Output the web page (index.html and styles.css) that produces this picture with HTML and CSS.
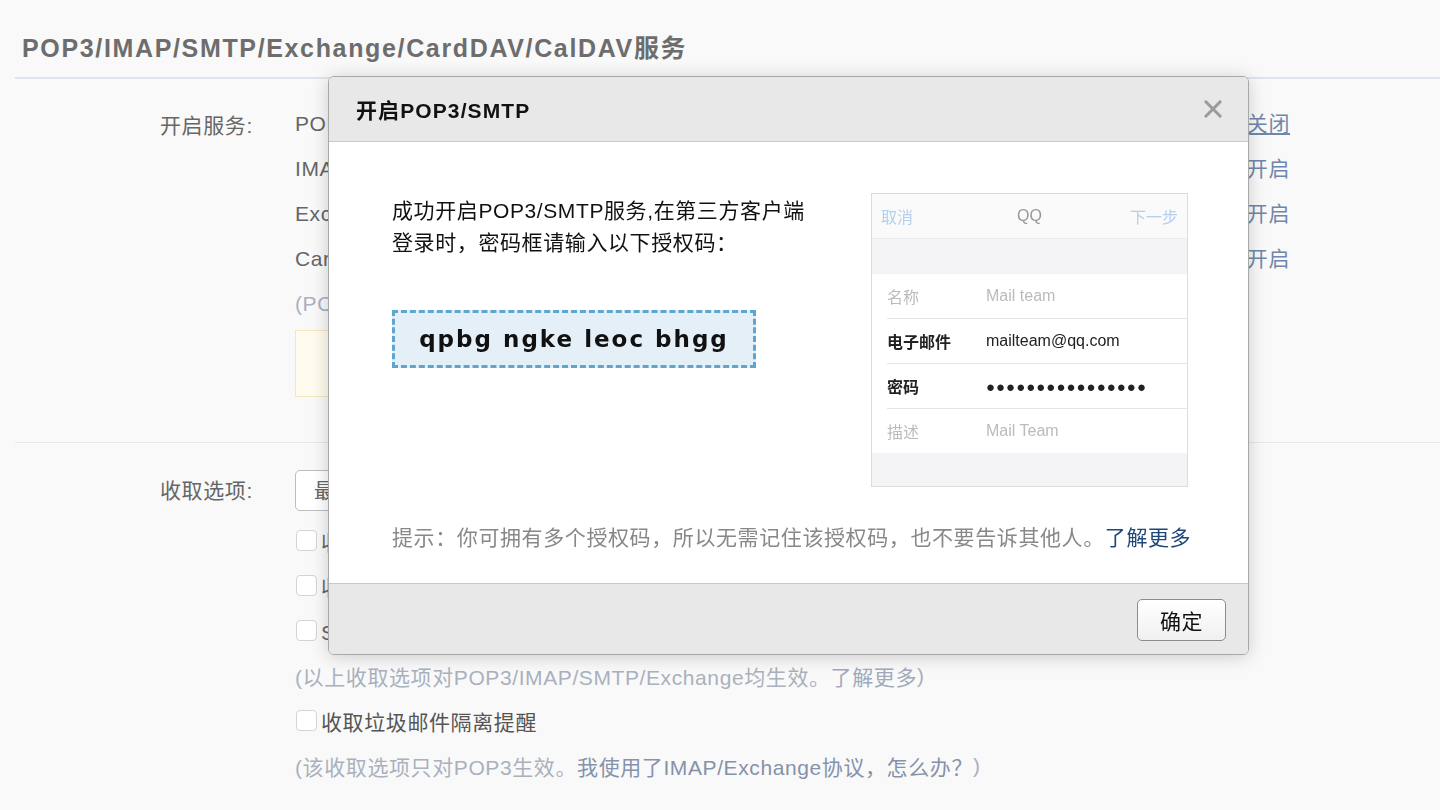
FILE: index.html
```html
<!DOCTYPE html>
<html lang="zh-CN">
<head>
    <meta charset="UTF-8">
    <meta name="viewport" content="width=device-width, initial-scale=1.0">
    <title>POP3/IMAP/SMTP服务设置</title>
    <link rel="stylesheet" href="styles.css">
</head>
<body>

<div class="settings">
    <h2 class="settings-title">POP3/IMAP/SMTP/Exchange/CardDAV/CalDAV服务</h2>

    <!-- 开启服务 -->
    <div class="block">
        <div class="row-label service-label">开启服务:</div>
        <div class="row-field">
            <div class="line"><span>POP3/SMTP服务 (如何使用 Foxmail 等软件收发邮件？)</span><a class="switch underline">关闭</a></div>
            <div class="line"><span>IMAP/SMTP服务 (什么是 IMAP，它又是如何设置？)</span><a class="switch">开启</a></div>
            <div class="line"><span>Exchange服务 (什么是Exchange，它又是如何设置？)</span><a class="switch">开启</a></div>
            <div class="line"><span>CardDAV/CalDAV服务 (什么是CardDAV/CalDAV，它又是如何设置？)</span><a class="switch">开启</a></div>
            <div class="line note">(POP3/IMAP/SMTP/CardDAV/CalDAV服务均支持SSL连接。如何设置？)</div>
            <div class="tip-box">温馨提示：登录第三方客户端时，密码框请输入“授权码”进行验证。</div>
        </div>
    </div>

    <!-- 收取选项 -->
    <div class="block block-last">
        <div class="row-label select-label">收取选项:</div>
        <div class="row-field">
            <div class="select">最近30天的邮件</div>
            <label class="line check"><span class="box"></span>收取“我的文件夹”</label>
            <label class="line check"><span class="box"></span>收取“QQ邮件订阅”</label>
            <label class="line check"><span class="box"></span>SMTP发信后保存到服务器</label>
            <div class="line note">(以上收取选项对POP3/IMAP/SMTP/Exchange均生效。<a class="note-link">了解更多</a>)</div>
            <label class="line check dark"><span class="box"></span>收取垃圾邮件隔离提醒</label>
            <div class="line note">(该收取选项只对POP3生效。<a class="note-strong">我使用了IMAP/Exchange协议，怎么办？</a>)</div>
        </div>
    </div>
</div>

<!-- 弹窗 -->
<div class="dialog">
    <div class="dialog-head">
        <span class="dialog-title">开启POP3/SMTP</span>
        <svg class="close" width="18" height="18" viewBox="0 0 18 18">
            <path d="M2,2 L16,16 M16,2 L2,16" stroke="#9b9b9b" stroke-width="3" stroke-linecap="square"/>
        </svg>
    </div>

    <div class="dialog-body">
        <div class="intro">
            <div class="intro-text">
                <p>成功开启POP3/SMTP服务,在第三方客户端</p>
                <p>登录时，密码框请输入以下授权码：</p>
                <div class="code">qpbg ngke leoc bhgg</div>
            </div>

            <div class="phone">
                <div class="phone-bar">
                    <span class="bar-left">取消</span>
                    <span class="bar-mid">QQ</span>
                    <span class="bar-right">下一步</span>
                </div>
                <div class="phone-gap"></div>
                <div class="phone-list">
                    <div class="phone-row light"><span class="k">名称</span><span>Mail team</span></div>
                    <div class="phone-row"><span class="k">电子邮件</span><span>mailteam@qq.com</span></div>
                    <div class="phone-row"><span class="k">密码</span><span class="dots">●●●●●●●●●●●●●●●●</span></div>
                    <div class="phone-row light"><span class="k">描述</span><span>Mail Team</span></div>
                </div>
            </div>
        </div>

        <p class="hint">提示：你可拥有多个授权码，所以无需记住该授权码，也不要告诉其他人。<a>了解更多</a></p>
    </div>

    <div class="dialog-foot">
        <button class="btn">确定</button>
    </div>
</div>

</body>
</html>
```

FILE: styles.css
```css
body {
    margin: 0;
    background-color: #f9f9f9;
    font-family: "Liberation Sans", "Noto Sans CJK SC", sans-serif;
    font-size: 21px;
    letter-spacing: 0.6px;
    color: #666;
}

/* 页面背景部分 */
.settings {
    padding-left: 15px;
}
.settings-title {
    margin: 0;
    padding: 33px 0 14px 7px;
    font-size: 25px;
    line-height: 30px;
    letter-spacing: 1.65px;
    color: #6d6d6d;
    border-bottom: 2px solid #dde4ec;
}
.block {
    display: flex;
    padding: 20px 0 45px;
    border-bottom: 1px solid #e7e7e7;
}
.block-last {
    padding-top: 27px;
    border-bottom: none;
}
.row-label {
    width: 135px;
    padding-left: 145px;
    line-height: 45px;
}
.service-label {
    padding-top: 4px;
}
.select-label {
    line-height: 41px;
}
.row-field {
    width: 995px;
}
.line {
    display: flex;
    align-items: center;
    justify-content: space-between;
    height: 45px;
    white-space: nowrap;
}
.switch {
    color: #6f87ab;
}
.underline {
    text-decoration: underline;
}
.note {
    justify-content: flex-start;
    color: #a9b1bd;
}
.note-link {
    color: #a0aabb;
}
.note-strong {
    color: #8592aa;
}
.tip-box {
    box-sizing: border-box;
    width: 900px;
    height: 67px;
    margin-top: 6px;
    padding: 18px 0 0 60px;
    border: 1px solid #f4e6bd;
    background-color: #fffcef;
    font-size: 18px;
    white-space: nowrap;
    overflow: hidden;
}
.select {
    box-sizing: border-box;
    width: 300px;
    height: 41px;
    line-height: 39px;
    margin-bottom: 7px;
    padding-left: 18px;
    border: 1px solid #bdbdbd;
    border-radius: 5px;
    background-color: #fff;
}
.check {
    justify-content: flex-start;
}
.check.dark {
    color: #555;
}
.box {
    box-sizing: border-box;
    width: 21px;
    height: 21px;
    margin: 0 4px 0 1px;
    border: 1px solid #d4d4d4;
    border-radius: 4px;
    background-color: #fff;
}

/* 弹窗 */
.dialog {
    position: fixed;
    left: 328px;
    top: 76px;
    width: 919px;
    border: 1px solid #a8a8a8;
    border-radius: 6px;
    background-color: #fff;
    box-shadow: 0 2px 18px rgba(0, 0, 0, 0.18);
    overflow: hidden;
    color: #111;
}
.dialog-head {
    display: flex;
    align-items: center;
    justify-content: space-between;
    height: 64px;
    padding: 0 26px 0 27px;
    background-color: #e8e8e8;
    border-bottom: 1px solid #c8c8c8;
}
.dialog-title {
    font-size: 21px;
    font-weight: bold;
    letter-spacing: 1.1px;
    color: #111;
}
.dialog-body {
    box-sizing: border-box;
    height: 441px;
    padding: 51px 60px 0 63px;
}
.intro {
    display: flex;
    justify-content: space-between;
}
.intro-text {
    margin-top: 2px;
}
.intro-text p {
    margin: 0;
    line-height: 32px;
    color: #111;
}
.code {
    box-sizing: border-box;
    width: 364px;
    height: 58px;
    margin-top: 51px;
    display: flex;
    align-items: center;
    justify-content: center;
    border: 3px dashed #5ea6cb;
    background-color: #e4eff8;
    font-family: "DejaVu Sans", sans-serif;
    font-weight: bold;
    font-size: 23px;
    letter-spacing: 2px;
    color: #111;
}

/* 手机截图示意 */
.phone {
    box-sizing: border-box;
    width: 317px;
    height: 294px;
    border: 1px solid #dcdcdc;
    background-color: #f4f4f6;
    font-size: 16px;
    letter-spacing: 0;
}
.phone-bar {
    display: grid;
    grid-template-columns: 1fr auto 1fr;
    align-items: center;
    height: 44px;
    padding: 0 9px;
    background-color: #fafafa;
    border-bottom: 1px solid #ededed;
    color: #b3d0ee;
}
.bar-mid {
    color: #999;
}
.bar-right {
    text-align: right;
}
.phone-gap {
    height: 35px;
}
.phone-list {
    padding-left: 15px;
    background-color: #fff;
}
.phone-row {
    display: flex;
    align-items: center;
    height: 44px;
    border-bottom: 1px solid #e6e6e6;
    color: #222;
}
.phone-row:last-child {
    border-bottom: none;
}
.phone-row .k {
    width: 99px;
    font-weight: bold;
}
.phone-row.light {
    color: #bbb;
}
.phone-row.light .k {
    font-weight: normal;
}
.dots {
    font-size: 15px;
    letter-spacing: 1px;
}
.hint {
    margin: 36px 0 0;
    line-height: 30px;
    white-space: nowrap;
    color: #888;
}
.hint a {
    color: #1e477a;
}
.dialog-foot {
    box-sizing: border-box;
    display: flex;
    justify-content: flex-end;
    height: 71px;
    padding: 15px 22px 0 0;
    background-color: #e8e8e8;
    border-top: 1px solid #c8c8c8;
}
.btn {
    width: 89px;
    height: 42px;
    border: 1px solid #8c8c8c;
    border-radius: 5px;
    background: linear-gradient(#fff, #f0f0f0);
    font-family: inherit;
    font-size: 21px;
    letter-spacing: 0.6px;
    color: #111;
}
```
